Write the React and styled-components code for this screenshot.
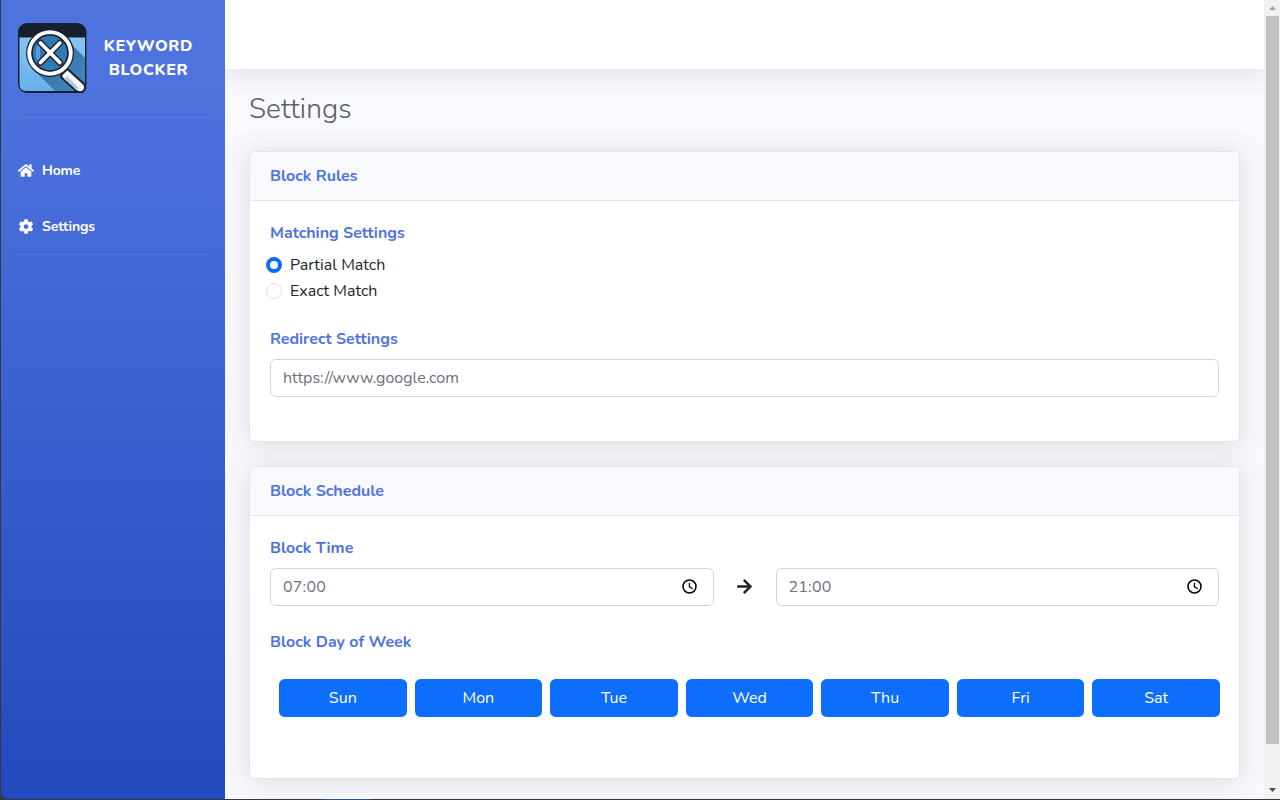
import React, { useState } from "react";
import styled, { createGlobalStyle } from "styled-components";
import { FaHome, FaCog, FaArrowRight } from "react-icons/fa";

const GlobalStyle = createGlobalStyle`
  *, *::before, *::after { box-sizing: border-box; }
  html, body { margin: 0; padding: 0; overflow: hidden; }
  body {
    font-family: Nunito, Lato, "Open Sans", sans-serif;
    font-size: 16px;
    line-height: 24px;
    color: #212529;
    background: #36383d;
  }
`;

const Page = styled.div`
  display: flex;
  height: 800px;
  width: 1280px;
  padding: 0 0 1px 1px;
  background: linear-gradient(90deg, #36383d 322px, #2f4f9c 322px, #2f4f9c 371px, #36383d 371px);
  overflow: hidden;
`;

const Sidebar = styled.nav`
  flex: 0 0 224px;
  display: flex;
  flex-direction: column;
  padding: 23px 16px 0;
  border-bottom-left-radius: 7px;
  background: linear-gradient(180deg, #4e73df 10%, #224abe 100%);
  color: #fff;
`;

const Brand = styled.div`
  display: flex;
  align-items: center;
  height: 70px;
  margin-bottom: 24px;
`;

const BrandName = styled.div`
  flex: 1;
  display: flex;
  flex-direction: column;
  align-items: center;
  padding-left: 1px;
  font-weight: 850;
  text-transform: uppercase;
`;

const Divider = styled.hr`
  width: 192px;
  height: 1px;
  margin: 0;
  border: 0;
  background: rgba(255, 255, 255, 0.06);
`;

const NavList = styled.ul`
  display: flex;
  flex-direction: column;
  margin: 0;
  padding: 25px 0 0 1px;
  list-style: none;
`;

const NavItem = styled.li`
  display: flex;
  align-items: center;
  gap: 8px;
  height: 56px;
  font-size: 14px;
  font-weight: 700;
  &:last-child { margin-bottom: -1px; }
  svg { width: 16px; height: 15px; margin-bottom: 1px; }
`;

const Text = styled.span`
  letter-spacing: ${(p) => p.$track || 0}px;
  white-space: nowrap;
`;

const Content = styled.div`
  flex: 1;
  min-width: 0;
  display: flex;
  flex-direction: column;
  background: #f8f9fc;
  overflow: hidden;
`;

const Topbar = styled.header`
  flex: 0 0 69px;
  background: #fff;
  box-shadow: 0 2px 28px 0 rgba(58, 59, 69, 0.15);
`;

const Main = styled.main`
  display: flex;
  flex-direction: column;
  gap: 24px;
  padding: 23px 24px 0;
`;

const Title = styled.h1`
  margin: 0 0 1px;
  height: 34px;
  font-size: 28px;
  line-height: 34px;
  font-weight: 350;
  color: #5a5c69;
`;

const Card = styled.section`
  flex: none;
  height: ${(p) => p.$height}px;
  border: 1px solid #e3e6f0;
  border-radius: 5.6px;
  background: #fff;
  box-shadow: 0 2px 28px 0 rgba(58, 59, 69, 0.15);
`;

const CardHeader = styled.div`
  height: 49px;
  padding: 12px 20px;
  border-bottom: 1px solid #e3e6f0;
  border-radius: 5px 5px 0 0;
  background: #f8f9fc;
  font-weight: 700;
  color: #4e73df;
`;

const CardBody = styled.div`
  display: flex;
  flex-direction: column;
  padding: 20px;
`;

const SectionTitle = styled.h6`
  margin: ${(p) => p.$top || 0}px 0 8px;
  height: 24px;
  font-size: 16px;
  line-height: 24px;
  font-weight: 700;
  color: #4e73df;
`;

const RadioRow = styled.label`
  display: flex;
  align-items: center;
  gap: 8px;
  height: 24px;
  margin: 0 0 2px -4px;
`;

const Radio = styled.input`
  appearance: none;
  width: 16px;
  height: 16px;
  margin: 0;
  border-radius: 50%;
  border: 1px solid #dee2e6;
  background: #fff;
  &:checked {
    border: 4px solid #0d6efd;
  }
`;

const Field = styled.div`
  flex: ${(p) => p.$flex || "none"};
  display: flex;
  align-items: center;
  justify-content: space-between;
  height: 38px;
  padding: 0 15px 0 12px;
  border: 1px solid #d1d3e2;
  border-radius: 5.6px;
  background: #fff;
  color: #6e707e;
`;

const TimeRow = styled.div`
  display: flex;
  align-items: center;
`;

const ArrowCell = styled.div`
  flex: 0 0 62px;
  display: flex;
  justify-content: center;
  svg { width: 17px; height: 17px; margin: 0 1px 1px 0; }
`;

const Days = styled.div`
  display: grid;
  grid-template-columns: repeat(7, 1fr);
  gap: 8px;
  margin: 17px -1px 0 9px;
`;

const DayButton = styled.button`
  height: 38px;
  padding: 0;
  border: 0;
  border-radius: 5.6px;
  background: #0d6efd;
  color: #fff;
  font: inherit;
`;

const ScrollTrack = styled.div`
  flex: 0 0 16px;
  display: flex;
  flex-direction: column;
  align-items: center;
  padding: 0 1px 0 2px;
  background: #f1f1f1;
`;

const ScrollArrow = styled.svg`
  flex: 0 0 16px;
  width: 13px;
  height: 16px;
`;

const ScrollThumb = styled.div`
  flex: 0 0 728px;
  align-self: stretch;
  margin-bottom: 38px;
  background: #c1c1c1;
`;

const Logo = () => (
  <svg width="70" height="70" viewBox="0 0 70 70">
    <defs>
      <linearGradient id="sky" x1="0" y1="0" x2="0" y2="1">
        <stop offset="0" stopColor="#84c4f8" />
        <stop offset="1" stopColor="#68b0ea" />
      </linearGradient>
      <linearGradient id="shade" x1="0" y1="0" x2="1" y2="1">
        <stop offset="0" stopColor="#2d66a0" />
        <stop offset="1" stopColor="#4588c0" />
      </linearGradient>
      <clipPath id="tile"><rect x="2.5" y="1.5" width="65.5" height="66.5" rx="6" /></clipPath>
    </defs>
    <rect x="1" y="0" width="68.4" height="70" rx="9" fill="#17202d" />
    <g clipPath="url(#tile)">
      <rect x="2" y="14.5" width="66" height="54" fill="url(#sky)" />
      <path d="M50 17 L68 35 V68 H38 L14 44 Z" fill="url(#shade)" />
    </g>
    <path d="M45 51 L50.5 46 L67 61 Q70 66 65 69 Q60 70 56 65 L44 54 Z" fill="#f5f7fb" stroke="#17202d" strokeWidth="2" strokeLinejoin="round" />
    <path d="M47 56 L50 53 L62 65 L60 67 Z" fill="#b9c9e2" />
    <circle cx="33" cy="30" r="21" fill="#2f7ab5" stroke="#17202d" strokeWidth="5.8" />
    <path d="M23 19.5 A15 15 0 0 0 23 40.5 Z" fill="#559fd6" />
    <circle cx="33" cy="30" r="20.6" fill="none" stroke="#fff" strokeWidth="4.2" />
    <circle cx="33" cy="30" r="17.9" fill="none" stroke="#17202d" strokeWidth="1.5" />
    <path d="M23.5 20 L42.8 39.5 M42.8 20 L23.5 39.5" stroke="#17202d" strokeWidth="6.4" strokeLinecap="round" />
    <path d="M23.5 20 L42.8 39.5 M42.8 20 L23.5 39.5" stroke="#fff" strokeWidth="3.8" strokeLinecap="round" />
  </svg>
);

const Clock = () => (
  <svg width="16" height="16" viewBox="0 0 16 16" fill="none" stroke="#000">
    <circle cx="7.5" cy="7.5" r="6.5" strokeWidth="1.5" />
    <path d="M7.4 3.7v4.1l3.2 2" strokeWidth="1.2" />
  </svg>
);

const DAYS = ["Sun", "Mon", "Tue", "Wed", "Thu", "Fri", "Sat"];

export default function App() {
  const [match, setMatch] = useState("partial");
  return (
    <>
      <GlobalStyle />
      <Page>
        <Sidebar>
          <Brand>
            <Logo />
            <BrandName>
              <Text $track={0.65}>Keyword</Text>
              <Text $track={0.65}>Blocker</Text>
            </BrandName>
          </Brand>
          <Divider />
          <NavList>
            <NavItem><FaHome /><Text $track={-0.15}>Home</Text></NavItem>
            <NavItem><FaCog /><Text $track={-0.12}>Settings</Text></NavItem>
          </NavList>
          <Divider />
        </Sidebar>
        <Content>
          <Topbar />
          <Main>
            <Title><Text $track={0.1}>Settings</Text></Title>
            <Card $height={291}>
              <CardHeader><Text>Block Rules</Text></CardHeader>
              <CardBody>
                <SectionTitle><Text>Matching Settings</Text></SectionTitle>
                <RadioRow>
                  <Radio type="radio" name="match" checked={match === "partial"} onChange={() => setMatch("partial")} />
                  <Text>Partial Match</Text>
                </RadioRow>
                <RadioRow>
                  <Radio type="radio" name="match" checked={match === "exact"} onChange={() => setMatch("exact")} />
                  <Text>Exact Match</Text>
                </RadioRow>
                <SectionTitle $top={22}><Text>Redirect Settings</Text></SectionTitle>
                <Field><Text>https://www.google.com</Text></Field>
              </CardBody>
            </Card>
            <Card $height={313}>
              <CardHeader><Text>Block Schedule</Text></CardHeader>
              <CardBody>
                <SectionTitle><Text>Block Time</Text></SectionTitle>
                <TimeRow>
                  <Field $flex="1"><Text $track={0.2}>07:00</Text><Clock /></Field>
                  <ArrowCell><FaArrowRight /></ArrowCell>
                  <Field $flex="1"><Text $track={0.2}>21:00</Text><Clock /></Field>
                </TimeRow>
                <SectionTitle $top={24}><Text>Block Day of Week</Text></SectionTitle>
                <Days>
                  {DAYS.map((d) => <DayButton key={d}><Text>{d}</Text></DayButton>)}
                </Days>
              </CardBody>
            </Card>
          </Main>
        </Content>
        <ScrollTrack>
          <ScrollArrow viewBox="0 0 13 16"><path d="M3 10h7L6.5 6z" fill="#a3a3a3" /></ScrollArrow>
          <ScrollThumb />
          <ScrollArrow viewBox="0 0 13 16"><path d="M3 6h7L6.5 10z" fill="#505050" /></ScrollArrow>
        </ScrollTrack>
      </Page>
    </>
  );
}
